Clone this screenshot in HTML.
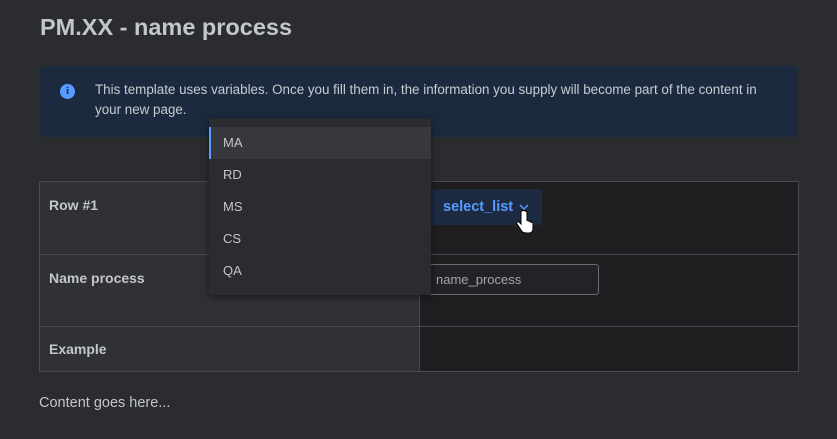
<!DOCTYPE html>
<html><head><style>
body{margin:0;width:837px;height:439px;background:#2b2c30;font-family:"Liberation Sans",sans-serif;color:#c7c9cc;position:relative;overflow:hidden}
.a{position:absolute}
h1{position:absolute;left:40px;top:14px;margin:0;font-size:23.5px;font-weight:bold;color:#c3c6ca}
.ban{left:40px;top:66px;width:758px;height:71px;background:#1c2a40;border-radius:3px}
.ban p{position:absolute;left:55px;top:14px;margin:0;font-size:13.4px;line-height:20px;color:#c9ccd0;width:682px}
.ic{left:20px;top:18px;width:15px;height:15px;border-radius:50%;background:#579dff;color:#1c2a40;font-size:11px;font-weight:bold;text-align:center;line-height:15px;font-family:"Liberation Serif",serif}
table{position:absolute;left:39px;top:181px;border-collapse:collapse;width:760px;table-layout:fixed}
td{border:1px solid #4a4b50;vertical-align:top;padding:15px 9px 0;font-size:14px;font-weight:bold;color:#c3c6ca;box-sizing:border-box}
td.l{background:#303136;width:380px}
td.r{background:#1f1f22}
.dd{left:209px;top:118px;width:222px;height:177px;background:#2b2c30;border-radius:3px;box-shadow:0 2px 8px rgba(0,0,0,.5)}
.it{position:absolute;left:0;width:222px;height:32px;line-height:32px;padding-left:14px;font-size:13px;color:#c4c6ca;box-sizing:border-box}
.sel{left:430px;top:189px;width:112px;height:36px;background:#1c2b41;border-radius:3px;color:#579dff;font-size:14.5px;font-weight:bold;line-height:36px;padding-left:13px;box-sizing:border-box}
.inp{left:428px;top:264px;width:171px;height:31px;border:1px solid #6b6d72;border-radius:3px;background:#222326;box-sizing:border-box;font-size:13px;color:#a4a7ab;line-height:29px;padding-left:7px}
</style></head><body>
<h1>PM.XX - name process</h1>
<div class="a ban"><div class="a ic">i</div><p>This template uses variables. Once you fill them in, the information you supply will become part of the content in your new page.</p></div>
<table>
<tr style="height:73px"><td class="l">Row #1</td><td class="r"></td></tr>
<tr style="height:72px"><td class="l">Name process</td><td class="r"></td></tr>
<tr style="height:45px"><td class="l" style="padding-top:14px">Example</td><td class="r"></td></tr>
</table>
<div class="a sel">select_list</div>
<svg class="a" style="left:519px;top:203px" width="10" height="8" viewBox="0 0 10 8"><path d="M1 2l4 4 4-4" fill="none" stroke="#579dff" stroke-width="1.5"/></svg>
<svg class="a" style="left:516px;top:210px" width="20" height="26" viewBox="0 0 20 26"><path d="M5 2v12l-2-2c-1-1-3 0-2 2l4 6c1 2 3 3 5 3h3c3 0 4-2 4-5v-5c0-1-2-1-2 0v-1c0-1-2-1-2 0v-1c0-1-2-1-2 0V2C9 0 5 0 5 2z" fill="#fff" stroke="#000" stroke-width="1"/></svg>
<div class="a inp">name_process</div>
<div class="a" style="left:39px;top:395px;font-size:14.5px;color:#c3c6ca">Content goes here...</div>
<div class="a dd">
<div class="it" style="top:9px;background:#37383d;border-left:2px solid #579dff;padding-left:12px">MA</div>
<div class="it" style="top:41px">RD</div>
<div class="it" style="top:73px">MS</div>
<div class="it" style="top:105px">CS</div>
<div class="it" style="top:137px">QA</div>
</div>
</body></html>
